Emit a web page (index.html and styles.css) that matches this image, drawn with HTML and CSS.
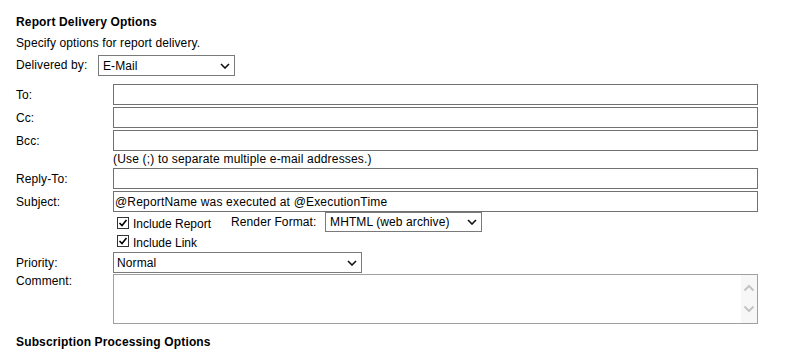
FILE: index.html
```html
<!DOCTYPE html>
<html>
<head>
<meta charset="utf-8">
<link rel="stylesheet" href="styles.css">
</head>
<body>
<div class="page">
  <h2 class="heading">Report Delivery Options</h2>
  <p class="desc">Specify options for report delivery.</p>
  <div class="delivered">
    <label class="delivered-label" for="delivery">Delivered by:</label>
    <span class="select select-delivery">
      <select id="delivery"><option>E-Mail</option></select>
      <svg class="chev" width="10" height="6" viewBox="0 0 10 6"><polyline points="1,1 5,5 9,1" fill="none" stroke="#111" stroke-width="1.6"/></svg>
    </span>
  </div>
  <div class="fields">
    <div class="field"><label class="lbl">To:</label><input class="text" type="text"></div>
    <div class="field"><label class="lbl">Cc:</label><input class="text" type="text"></div>
    <div class="field field-bcc"><label class="lbl">Bcc:</label><input class="text" type="text"></div>
    <div class="hint">(Use (;) to separate multiple e-mail addresses.)</div>
    <div class="field"><label class="lbl">Reply-To:</label><input class="text" type="text"></div>
    <div class="field field-subject"><label class="lbl">Subject:</label><input class="text" type="text" value="@ReportName was executed at @ExecutionTime"></div>
    <div class="check-row check-report">
      <span class="cb"><svg width="12" height="12" viewBox="0 0 12 12"><polyline points="2.5,6 5,8.5 9.5,3" fill="none" stroke="#000" stroke-width="1.6"/></svg></span>
      <span class="cb-text">Include Report</span>
      <span class="render-label">Render Format:</span>
      <span class="select select-render">
        <select><option>MHTML (web archive)</option></select>
        <svg class="chev" width="10" height="6" viewBox="0 0 10 6"><polyline points="1,1 5,5 9,1" fill="none" stroke="#111" stroke-width="1.6"/></svg>
      </span>
    </div>
    <div class="check-row check-link">
      <span class="cb"><svg width="12" height="12" viewBox="0 0 12 12"><polyline points="2.5,6 5,8.5 9.5,3" fill="none" stroke="#000" stroke-width="1.6"/></svg></span>
      <span class="cb-text">Include Link</span>
    </div>
    <div class="field field-priority"><label class="lbl">Priority:</label>
      <span class="select select-priority">
        <select><option>Normal</option></select>
        <svg class="chev" width="10" height="6" viewBox="0 0 10 6"><polyline points="1,1 5,5 9,1" fill="none" stroke="#111" stroke-width="1.6"/></svg>
      </span>
    </div>
    <div class="field field-comment"><label class="lbl">Comment:</label>
      <div class="comment">
        <textarea class="comment-text"></textarea>
        <div class="scrollbar">
          <svg width="12" height="8" viewBox="0 0 12 8"><polyline points="1.5,6.5 6,2 10.5,6.5" fill="none" stroke="#c4c4c4" stroke-width="2"/></svg>
          <svg width="12" height="8" viewBox="0 0 12 8"><polyline points="1.5,1.5 6,6 10.5,1.5" fill="none" stroke="#c4c4c4" stroke-width="2"/></svg>
        </div>
      </div>
    </div>
  </div>
  <h2 class="heading heading-sub">Subscription Processing Options</h2>
</div>
</body>
</html>
```
FILE: styles.css
```css
html, body {
  margin: 0;
  padding: 0;
  background: #fff;
}
body {
  font-family: "Liberation Sans", Arial, sans-serif;
  font-size: 12px;
  line-height: 14px;
  color: #000;
  letter-spacing: 0.1px;
}
.page {
  padding-left: 16px;
  width: 742px;
}
.heading {
  margin: 15px 0 0;
  font-size: 12px;
  font-weight: bold;
  line-height: 14px;
  letter-spacing: 0.15px;
}
.desc {
  margin: 7px 0 0;
}
.delivered {
  display: flex;
  align-items: center;
  margin-top: 5px;
  height: 21px;
}
.delivered-label {
  width: 82px;
  flex: none;
  margin-top: -2px;
}
.select {
  position: relative;
  display: inline-block;
  flex: none;
}
.select select {
  appearance: none;
  -webkit-appearance: none;
  display: block;
  box-sizing: border-box;
  border: 1px solid #7a7a7a;
  border-radius: 0;
  background: #fff;
  font: inherit;
  letter-spacing: inherit;
  color: #000;
  padding: 0 16px 0 3px;
  margin: 0;
  outline: none;
}
.select .chev {
  position: absolute;
  right: 5px;
  top: 50%;
  margin-top: -3px;
  pointer-events: none;
}
.select-delivery select {
  width: 137px;
  height: 21px;
  padding-left: 4px;
}
.fields {
  margin-top: 8px;
}
.field {
  display: flex;
  align-items: center;
  margin-bottom: 2px;
}
.lbl {
  width: 97px;
  flex: none;
}
.text {
  box-sizing: border-box;
  width: 645px;
  height: 21px;
  border: 1px solid #717171;
  border-radius: 0;
  padding: 0 1px;
  margin: 0;
  font: inherit;
  letter-spacing: 0.18px;
  color: #000;
  outline: none;
}
.field-bcc {
  margin-bottom: 0;
}
.hint {
  margin: 2px 0 0 97px;
  height: 15px;
  line-height: 12px;
  letter-spacing: 0.18px;
}
.field-subject {
  margin-bottom: 0;
}
.check-row {
  display: flex;
  align-items: center;
  height: 20px;
  padding-left: 101px;
}
.cb {
  box-sizing: border-box;
  width: 12px;
  height: 12px;
  border: 1px solid #333;
  background: #fff;
  flex: none;
  display: flex;
  align-items: center;
  justify-content: center;
}
.cb svg {
  display: block;
  flex: none;
}
.cb-text {
  margin-left: 4px;
  letter-spacing: 0;
}
.check-report .cb {
  margin-top: 2px;
}
.check-report .cb-text {
  margin-top: 3px;
}
.check-link .cb {
  margin-top: -2px;
}
.check-link .cb-text {
  margin-top: 1px;
}
.render-label {
  margin-left: 20px;
  width: 94px;
  flex: none;
}
.select-render select {
  width: 157px;
  height: 20px;
  padding-left: 4px;
}
.field-priority {
  margin-bottom: 1px;
}
.select-priority select {
  width: 249px;
  height: 21px;
}
.field-comment {
  align-items: flex-start;
  margin-bottom: 0;
}
.comment {
  box-sizing: border-box;
  width: 645px;
  height: 50px;
  border: 1px solid #a0a0a0;
  display: flex;
  background: #fff;
}
.comment-text {
  flex: 1;
  border: none;
  resize: none;
  outline: none;
  font: inherit;
  padding: 1px 2px;
  margin: 0;
  overflow: hidden;
}
.scrollbar {
  width: 16px;
  flex: none;
  background: #f7f7f7;
  display: flex;
  flex-direction: column;
  align-items: center;
  padding-top: 9px;
  gap: 13px;
}
.scrollbar svg {
  display: block;
}
.heading-sub {
  margin-top: 11px;
}
```
